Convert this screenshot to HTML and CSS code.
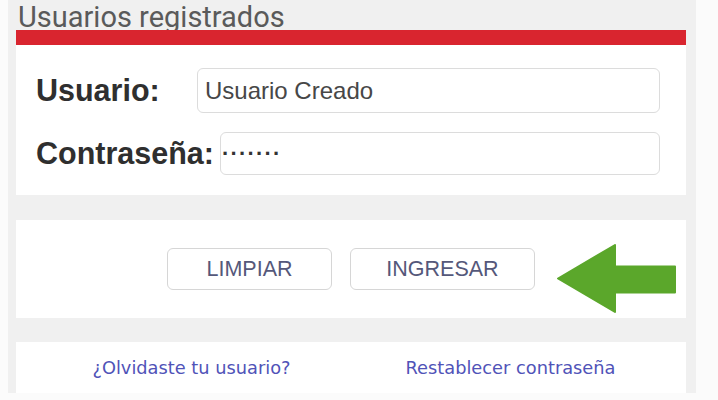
FILE: index.html
```html
<!DOCTYPE html>
<html lang="es">
<head>
<meta charset="utf-8">
<title>Usuarios registrados</title>
<link rel="stylesheet" href="styles.css">
</head>
<body>
<div class="panel">
  <div class="title">Usuarios registrados</div>
  <div class="redbar"></div>
  <div class="card card-form">
    <div class="row row-user">
      <span class="label label-user">Usuario:</span>
      <div class="field field-user">Usuario Creado</div>
    </div>
    <div class="row row-pass">
      <span class="label">Contraseña:</span>
      <div class="field field-pass"><span class="dots">·······</span></div>
    </div>
  </div>
  <div class="card card-actions">
    <button class="btn btn-clear" type="button">LIMPIAR</button>
    <button class="btn btn-login" type="button">INGRESAR</button>
    <svg class="arrow" width="120" height="70" viewBox="0 0 120 70" aria-hidden="true">
      <polygon points="1,34.5 58,1 58,22.5 118,22.5 118,48.5 58,48.5 58,68" fill="#5ba72b" stroke="#5ba72b" stroke-width="2" stroke-linejoin="round"/>
    </svg>
  </div>
  <div class="card card-links">
    <a class="link" href="#">¿Olvidaste tu usuario?</a>
    <a class="link" href="#">Restablecer contraseña</a>
  </div>
</div>
</body>
</html>
```

FILE: styles.css
```css
html, body {
  margin: 0;
  padding: 0;
}
body {
  background: #fbfbfb;
  width: 718px;
  height: 400px;
  overflow: hidden;
}
.panel {
  margin-left: 8px;
  width: 688px;
  height: 393px;
  box-sizing: border-box;
  padding: 0 10px 0 8px;
  background: #f0f0f0;
  display: flex;
  flex-direction: column;
}
.title {
  height: 30px;
  box-sizing: border-box;
  padding: 5px 0 0 2px;
  line-height: 25px;
  font-family: Roboto, "Liberation Sans", sans-serif;
  font-size: 29px;
  color: #5a5a5a;
  white-space: nowrap;
}
.redbar {
  height: 15px;
  background: #d9252f;
}
.card {
  background: #ffffff;
}
.card-form {
  height: 150px;
  box-sizing: border-box;
  padding: 23px 26px 0 20px;
  display: flex;
  flex-direction: column;
  gap: 19px;
}
.row {
  display: flex;
  align-items: center;
  gap: 6px;
}
.label {
  font-family: "Liberation Sans", Arial, sans-serif;
  font-weight: bold;
  font-size: 30.5px;
  color: #2f2f2f;
  white-space: nowrap;
}
.label-user {
  min-width: 155px;
}
.field {
  flex: 1;
  box-sizing: border-box;
  border: 1.5px solid #dcdcdc;
  border-radius: 6px;
  background: #fff;
  display: flex;
  align-items: center;
  font-family: "Liberation Sans", Arial, sans-serif;
  color: #474747;
}
.field-user {
  height: 45px;
  padding-left: 7px;
  font-size: 24px;
}
.field-pass {
  height: 43px;
  padding-left: 1px;
}
.dots {
  font-size: 22px;
  letter-spacing: 1.2px;
  color: #333;
  font-weight: bold;
}
.card-actions {
  margin-top: 25px;
  height: 98px;
  position: relative;
  display: flex;
  align-items: center;
  justify-content: center;
  gap: 18px;
}
.btn {
  height: 42px;
  box-sizing: border-box;
  border: 1.5px solid #d6d6d6;
  border-radius: 6px;
  background: #fff;
  font-family: "Liberation Sans", Arial, sans-serif;
  font-size: 21.5px;
  color: #55587a;
  padding: 0;
}
.btn-clear {
  width: 165px;
}
.btn-login {
  width: 185px;
}
.arrow {
  position: absolute;
  left: 541px;
  top: 24px;
}
.card-links {
  margin-top: 24px;
  flex: 1;
  box-sizing: border-box;
  padding: 0 16px;
  display: grid;
  grid-template-columns: 1fr 1fr;
  align-items: center;
  justify-items: center;
}
.link {
  font-family: "DejaVu Sans", Verdana, sans-serif;
  font-size: 17.8px;
  color: #5053b8;
  text-decoration: none;
  white-space: nowrap;
}
```
